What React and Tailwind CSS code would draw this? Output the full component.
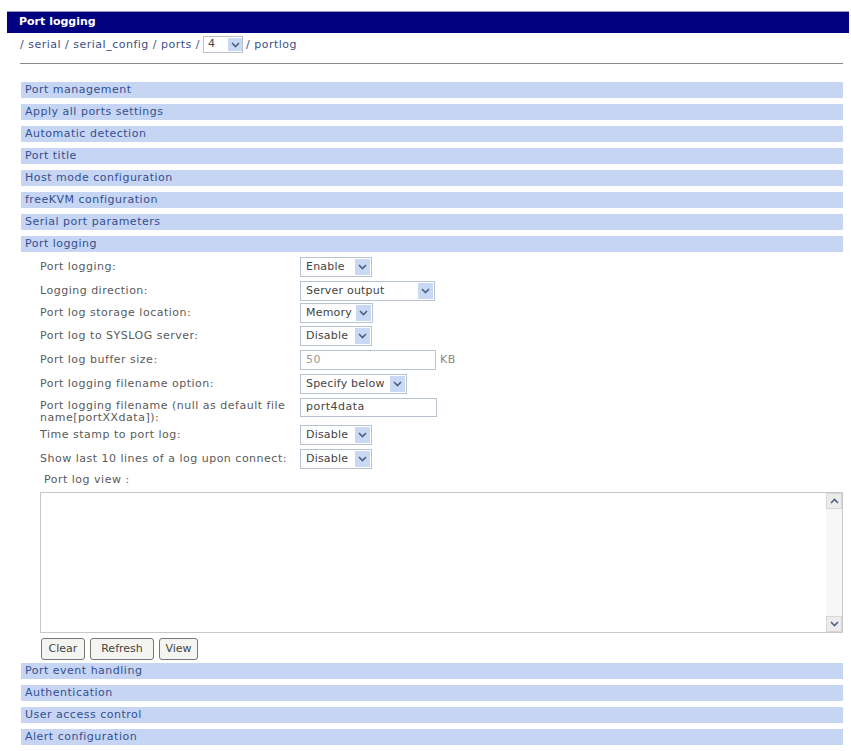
import React from "react";

const topSections = [
    "Port management",
    "Apply all ports settings",
    "Automatic detection",
    "Port title",
    "Host mode configuration",
    "freeKVM configuration",
    "Serial port parameters",
    "Port logging",
];

const bottomSections = [
    "Port event handling",
    "Authentication",
    "User access control",
    "Alert configuration",
];

const Chevron = ({ up }) => (
    <svg width="9" height="6" viewBox="0 0 9 6">
        <path
            d={up ? "M1 5 L4.5 1.5 L8 5" : "M1 1 L4.5 4.5 L8 1"}
            fill="none"
            stroke="#4d6185"
            strokeWidth="1.6"
        />
    </svg>
);

const FakeSelect = ({ value, width }) => (
    <div
        className="flex h-[20px] items-center border border-[#b9c3cf] bg-white pl-[5px] pr-[1px] tracking-[0.2px] text-[#444]"
        style={{ width }}
    >
        <span className="flex-1 truncate">{value}</span>
        <span className="flex h-[16px] w-[15px] shrink-0 items-center justify-center bg-[#c9d8f3]">
            <Chevron />
        </span>
    </div>
);

const SectionBar = ({ title }) => (
    <div className="mb-[6px] flex h-[16px] items-center bg-[#c6d5f4] pl-[4px] text-[#34508f]">
        {title}
    </div>
);

// mb differs per row to follow the original table spacing
const Row = ({ label, mb = "mb-[4px]", children }) => (
    <div className={`flex h-[20px] items-center ${mb}`}>
        <div className="w-[260px] text-[#5a5a5a]">{label}</div>
        {children}
    </div>
);

const App = () => {
    return (
        <div className="h-[751px] w-[851px] overflow-hidden bg-white pt-[11px] font-['DejaVu_Sans',sans-serif] text-[11px] tracking-[0.5px]">
            {/* Title bar */}
            <div className="ml-[7px] flex h-[22px] w-[842px] items-center border-t border-[#9a9ab8] bg-[#000080] pl-[12px] font-bold tracking-normal text-white">
                Port logging
            </div>

            {/* Breadcrumb */}
            <div className="ml-[20px] flex h-[31px] w-[823px] items-start border-b border-[#8a8a8a] pt-[3px] text-[#3c4f86]">
                <span className="leading-[17px]">/ serial / serial_config / ports /</span>
                <div className="mx-[3px] flex h-[17px] w-[40px] items-center border border-[#b9c3cf] pl-[4px] text-[#444]">
                    <span className="flex-1">4</span>
                    <span className="flex h-[13px] w-[14px] items-center justify-center bg-[#c9d8f3]">
                        <Chevron />
                    </span>
                </div>
                <span className="leading-[17px]">/ portlog</span>
            </div>

            <div className="ml-[21px] mt-[18px] w-[822px]">
                {topSections.map((s) => (
                    <SectionBar key={s} title={s} />
                ))}
            </div>

            {/* Port logging form */}
            <div className="-mt-[1px] ml-[40px] w-[803px]">
                <Row label="Port logging:">
                    <FakeSelect value="Enable" width={72} />
                </Row>
                <Row label="Logging direction:" mb="mb-[2px]">
                    <FakeSelect value="Server output" width={135} />
                </Row>
                <Row label="Port log storage location:" mb="mb-[3px]">
                    <FakeSelect value="Memory" width={73} />
                </Row>
                <Row label="Port log to SYSLOG server:">
                    <FakeSelect value="Disable" width={72} />
                </Row>
                <Row label="Port log buffer size:">
                    <div className="flex h-[20px] w-[136px] items-center border border-[#b9c3cf] pl-[5px] text-[#999]">
                        50
                    </div>
                    <span className="ml-[4px] text-[#888]">KB</span>
                </Row>
                <Row label="Port logging filename option:">
                    <FakeSelect value="Specify below" width={107} />
                </Row>
                <div className="flex h-[27px] items-start">
                    <div className="w-[260px] pt-[2px] leading-[12px] text-[#5a5a5a]">
                        Port logging filename (null as default file
                        <br />
                        name[portXXdata]):
                    </div>
                    <div className="flex h-[19px] w-[137px] items-center border border-[#b9c3cf] pl-[5px] text-[#444]">
                        port4data
                    </div>
                </div>
                <Row label="Time stamp to port log:">
                    <FakeSelect value="Disable" width={72} />
                </Row>
                <Row label="Show last 10 lines of a log upon connect:" mb="mb-0">
                    <FakeSelect value="Disable" width={72} />
                </Row>

                <div className="flex h-[23px] items-center pl-[4px] text-[#5a5a5a]">
                    Port log view :
                </div>

                {/* Log view with scrollbar */}
                <div className="flex h-[141px] border border-[#c8c8c8] bg-white">
                    <div className="flex-1" />
                    <div className="flex w-[16px] flex-col justify-between bg-[#f7f7f7]">
                        <div className="flex h-[16px] items-center justify-center border border-[#d6d6d6] bg-[#ececec]">
                            <Chevron up />
                        </div>
                        <div className="flex h-[16px] items-center justify-center border border-[#d6d6d6] bg-[#ececec]">
                            <Chevron />
                        </div>
                    </div>
                </div>

                <div className="mt-[5px] flex h-[22px] items-center gap-[5px] pl-[1px] tracking-normal text-[#444]">
                    <button className="h-[22px] w-[44px] rounded-[3px] border border-[#777] bg-[#f4f4f0]">
                        Clear
                    </button>
                    <button className="h-[22px] w-[64px] rounded-[3px] border border-[#777] bg-[#f4f4f0]">
                        Refresh
                    </button>
                    <button className="h-[22px] w-[39px] rounded-[3px] border border-[#777] bg-[#f4f4f0]">
                        View
                    </button>
                </div>
            </div>

            <div className="ml-[21px] mt-[3px] w-[822px]">
                {bottomSections.map((s) => (
                    <SectionBar key={s} title={s} />
                ))}
            </div>
        </div>
    );
};

export default App;
